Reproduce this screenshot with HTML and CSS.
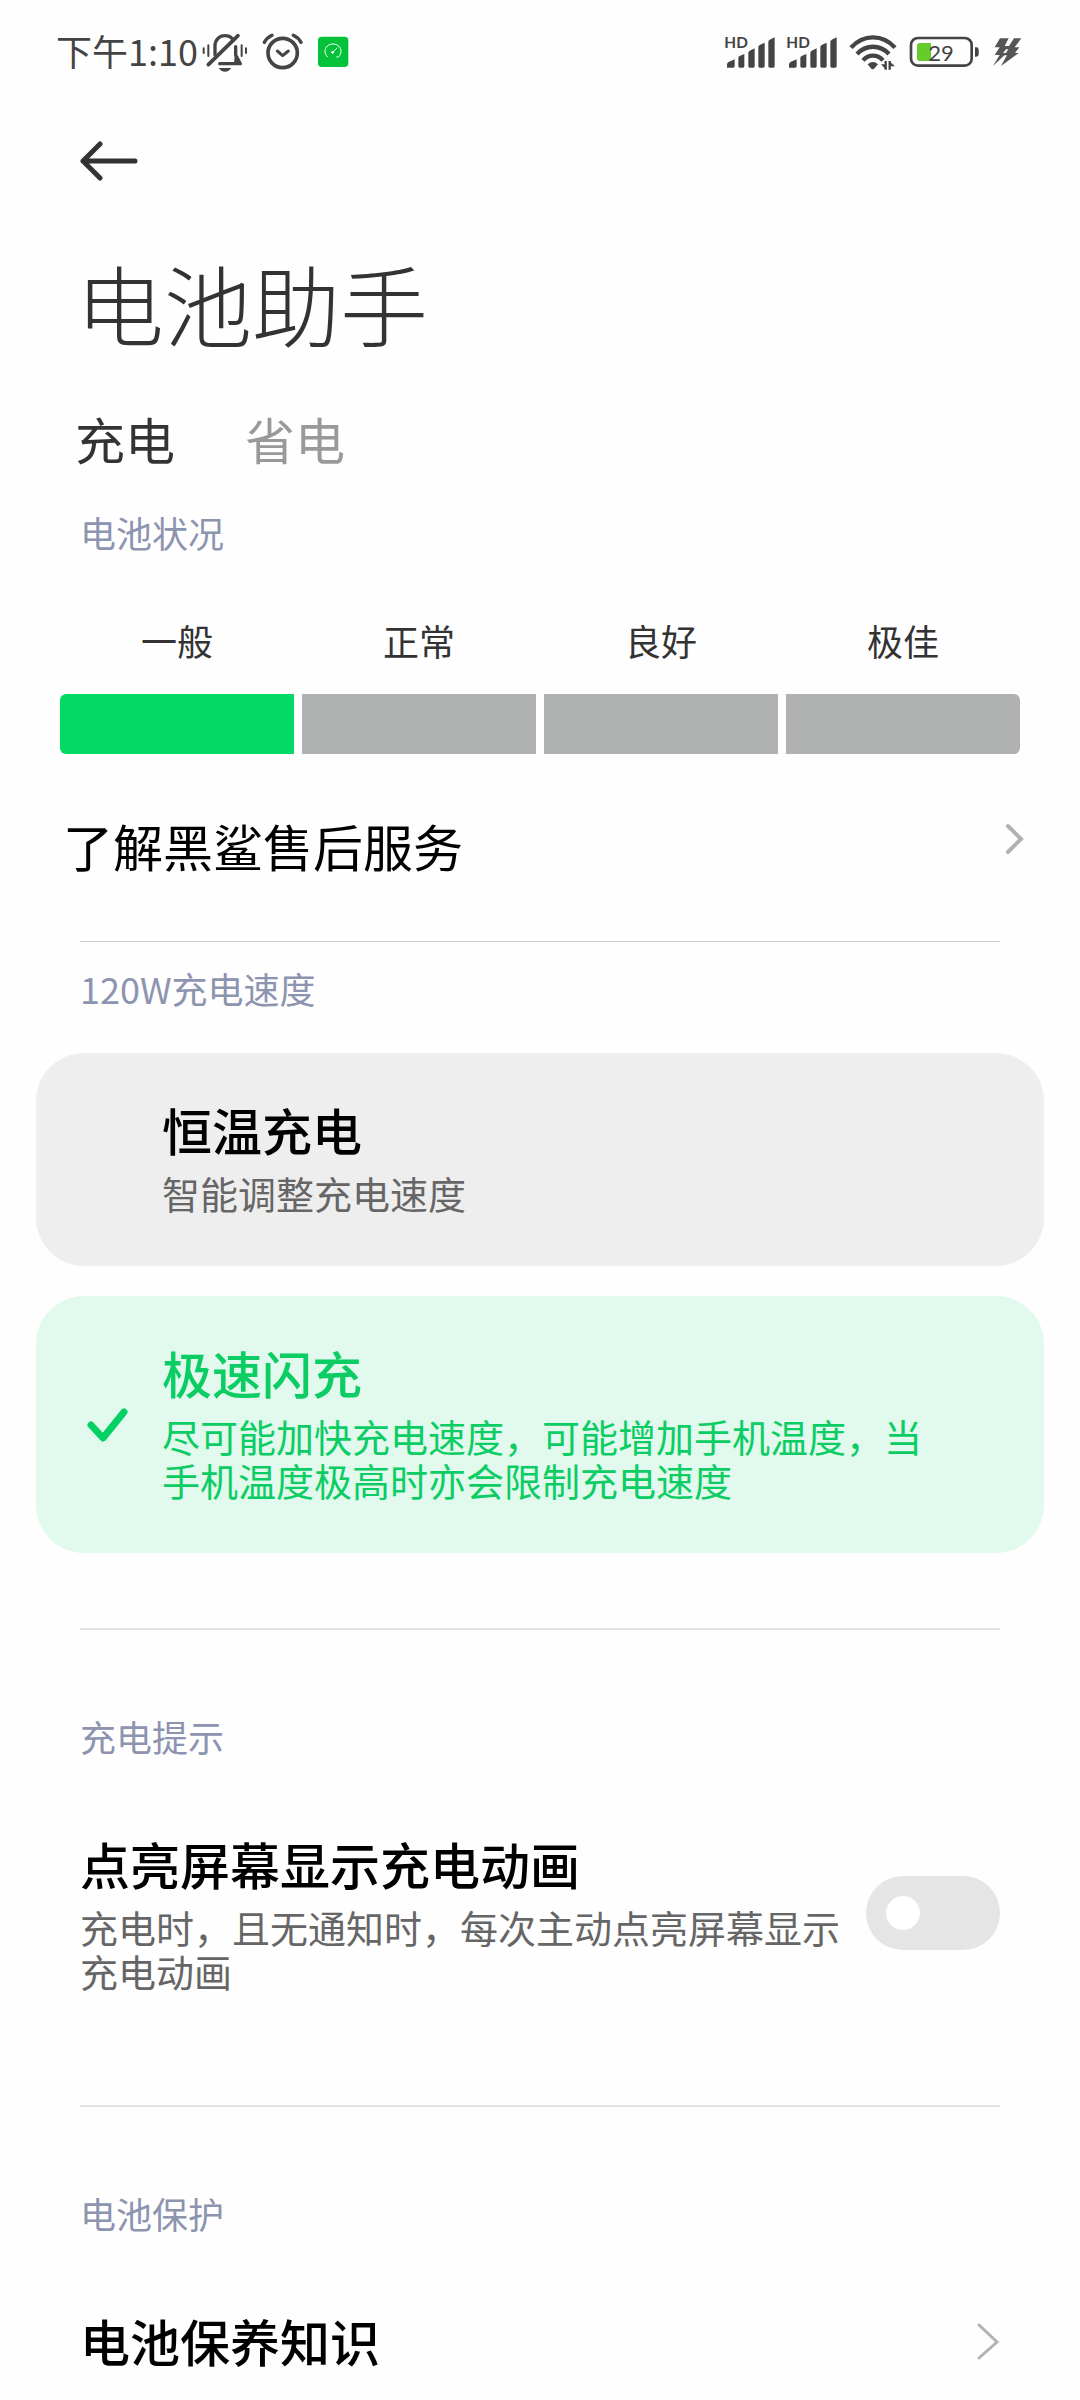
FILE: index.html
```html
<!DOCTYPE html>
<html lang="zh-CN">
<head>
    <meta charset="UTF-8">
    <meta name="viewport" content="width=device-width, initial-scale=1.0">
    <title>电池助手</title>
    <link rel="stylesheet" href="styles.css">
</head>
<body>
    <div class="status-bar">
        <span class="time">下午1:10</span>
        <div class="status-left">
            <!-- muted bell -->
            <svg class="icon" width="46" height="44" viewBox="489 30 138 132" fill="none" stroke="#444" stroke-linecap="round">
                <path d="M494 85v14M508 76v32M608 76v32M621 85v14" stroke-width="6"/>
                <path d="M528 104V78c0-18 12-31 30-31 9 0 16 3 21 8" stroke-width="10"/>
                <path d="M508 134 597 47" stroke-width="11"/>
                <path d="M590 80v25l14 26h-62" stroke-width="10" stroke-linejoin="round"/>
                <path d="M589 82v28l12 22h-16z" fill="#444" stroke="none"/>
                <path d="M539 144h38c-5 7-11 11-19 11s-14-4-19-11z" fill="#444" stroke="none"/>
            </svg>
            <!-- alarm clock -->
            <svg class="icon" width="41" height="44" viewBox="666 30 123 132" fill="none" stroke="#444" stroke-linecap="round" stroke-linejoin="round">
                <circle cx="728" cy="99" r="44" stroke-width="11"/>
                <path d="M673 67c5-9 13-16 23-21M783 67c-5-9-13-16-23-21" stroke-width="10"/>
                <path d="M712 93l16 14 17-14" stroke-width="9"/>
            </svg>
            <!-- speed app -->
            <svg class="icon" width="32" height="44" viewBox="834 30 96 132" fill="none" stroke="#fff" stroke-linecap="round">
                <rect x="837" y="50" width="91" height="91" rx="11" fill="#05c23b" stroke="none"/>
                <path d="M866 111c-5-5-8-10-8-17 0-13 11-22 24-22s24 9 24 22c0 7-3 12-8 17h-5" stroke-width="3"/>
                <path d="M881 97l13-13" stroke-width="3"/>
                <circle cx="881" cy="97" r="4" fill="#fff" stroke="none"/>
            </svg>
        </div>
        <div class="status-right">
            <!-- mobile signal, SIM 1 and SIM 2 -->
            <svg class="icon" width="50" height="44" viewBox="75 30 150 132" fill="#444">
                <text class="hd" x="73" y="84">HD</text>
                <path d="M81 143v-10q1-6 6-8l17-7v21q0 4-4 4zM115 139v-25q0-4 4-6l14-6v37q0 4-4 4h-10q-4 0-4-4zM145 139V99q0-5 4-7l15-7v54q0 4-4 4h-11q-4 0-4-4zM175 139V82q0-5 4-7l15-7v71q0 4-4 4h-11q-4 0-4-4zM205 139V66q0-5 4-7l15-7v87q0 4-4 4h-11q-4 0-4-4z"/>
            </svg>
            <svg class="icon" width="50" height="44" viewBox="75 30 150 132" fill="#444">
                <text class="hd" x="73" y="84">HD</text>
                <path d="M81 143v-10q1-6 6-8l17-7v21q0 4-4 4zM115 139v-25q0-4 4-6l14-6v37q0 4-4 4h-10q-4 0-4-4zM145 139V99q0-5 4-7l15-7v54q0 4-4 4h-11q-4 0-4-4zM175 139V82q0-5 4-7l15-7v71q0 4-4 4h-11q-4 0-4-4zM205 139V66q0-5 4-7l15-7v87q0 4-4 4h-11q-4 0-4-4z"/>
            </svg>
            <!-- wifi -->
            <svg class="icon" width="48" height="44" viewBox="441 30 144 132" fill="none" stroke="#444">
                <path d="M447 83c37-41 95-41 132 0" stroke-width="13"/>
                <path d="M465 102c27-29 69-29 96 0" stroke-width="13"/>
                <path d="M483 121c17-19 43-19 60 0" stroke-width="13"/>
                <path d="M497 133q16-14 31 0l-12 13q-4 3-8 0z" fill="#444" stroke="none"/>
                <path d="M551 123v26M563 123v26" stroke-width="7"/>
                <path d="M550 147l-13-14h14zM564 125l15 14h-15z" fill="#444" stroke="none"/>
            </svg>
            <!-- battery -->
            <svg class="icon" width="71" height="44" viewBox="624 30 213 132">
                <rect x="630" y="54" width="182" height="83" rx="21" fill="none" stroke="#444" stroke-width="8"/>
                <path d="M822 82h4q7 0 7 7v14q0 7-7 7h-4z" fill="#444"/>
                <path d="M656 69h34v54h-34q-8 0-8-8V77q0-8 8-8z" fill="#66cc2a"/>
                <text class="level" x="682" y="122">29</text>
            </svg>
            <!-- fast charging -->
            <svg class="icon" width="30" height="44" viewBox="870 30 90 132" fill="#555">
                <path d="M894 55h26l-12 23h13l15-23h22l-20 27h14l-13 17h11l-53 39 18-32h-8l-34 32 20-33h-15l15-23h-15zM912 88l-9 11h9l7-11z" fill-rule="evenodd"/>
            </svg>
        </div>
    </div>

    <header class="top">
        <a class="back" href="#" aria-label="返回">
            <svg class="icon" width="66" height="40" viewBox="0 0 66 40" fill="none" stroke="#333" stroke-width="5" stroke-linecap="round" stroke-linejoin="round">
                <path d="M24 3 7 20l17 17M7 20h52"/>
            </svg>
        </a>
        <h1>电池助手</h1>
    </header>

    <nav class="tabs">
        <button type="button" class="tab active">充电</button>
        <button type="button" class="tab">省电</button>
    </nav>

    <main>
        <section class="condition">
            <h2>电池状况</h2>
            <ul class="levels">
                <li class="current">一般</li>
                <li>正常</li>
                <li>良好</li>
                <li>极佳</li>
            </ul>
            <a class="service" href="#">
                <span>了解黑鲨售后服务</span>
                <svg class="icon" width="20" height="32" viewBox="0 0 20 32" fill="none" stroke="#b2b2b2" stroke-width="4" stroke-linecap="round">
                    <path d="M3 3l13 13L3 29"/>
                </svg>
            </a>
        </section>

        <section class="speed">
            <h2>120W充电速度</h2>
            <label class="card">
                <input type="radio" name="speed" value="constant">
                <svg class="check" width="44" height="36" viewBox="0 0 44 36">
                    <path d="M5 18l12 13L38 5"/>
                </svg>
                <span class="text">
                    <span class="title">恒温充电</span>
                    <span class="desc">智能调整充电速度</span>
                </span>
            </label>
            <label class="card">
                <input type="radio" name="speed" value="fast" checked>
                <svg class="check" width="44" height="36" viewBox="0 0 44 36">
                    <path d="M5 18l12 13L38 5"/>
                </svg>
                <span class="text">
                    <span class="title">极速闪充</span>
                    <span class="desc">尽可能加快充电速度，可能增加手机温度，当手机温度极高时亦会限制充电速度</span>
                </span>
            </label>
        </section>

        <section class="group">
            <h2>充电提示</h2>
            <label class="row">
                <span class="text">
                    <span class="title">点亮屏幕显示充电动画</span>
                    <span class="desc">充电时，且无通知时，每次主动点亮屏幕显示充电动画</span>
                </span>
                <input type="checkbox" class="switch">
            </label>
        </section>

        <section class="group">
            <h2>电池保护</h2>
            <a class="row" href="#">
                <span class="title">电池保养知识</span>
                <svg class="icon" width="24" height="40" viewBox="0 0 24 40" fill="none" stroke="#b2b2b2" stroke-width="3" stroke-linecap="round">
                    <path d="M3 5l18 17L3 38"/>
                </svg>
            </a>
        </section>
    </main>
</body>
</html>
```
FILE: styles.css
```css
* {
    box-sizing: border-box;
}
body {
    margin: 0;
    padding-bottom: 29px;
    background-color: #fefefe;
    color: #000;
    font-family: "Noto Sans CJK SC", sans-serif;
}
h1, h2, ul {
    margin: 0;
    padding: 0;
    font-weight: 400;
}
a {
    color: inherit;
    text-decoration: none;
}
.icon, .check {
    display: block;
    flex-shrink: 0;
}

/* status bar */
.status-bar {
    display: flex;
    align-items: center;
    height: 104px;
    padding: 0 58px 0 56px;
}
.time {
    padding-bottom: 4px;
    color: #444;
    font-size: 36px;
    line-height: 48px;
}
.status-left {
    display: flex;
    gap: 14px;
    margin-left: 4px;
}
.status-right {
    display: flex;
    gap: 12px;
    margin-left: auto;
}
.hd {
    font-family: Lato, sans-serif;
    font-size: 46px;
    font-weight: 700;
}
.level {
    fill: #444;
    font-family: Lato, sans-serif;
    font-size: 66px;
}

/* header */
.top {
    padding: 37px 76px 0;
}
.back {
    display: inline-block;
}
h1 {
    margin-top: 56px;
    color: #333;
    font-size: 88px;
    font-weight: 300;
    line-height: 120px;
}
.tabs {
    display: flex;
    gap: 70px;
    padding: 46px 75px 40px;
}
.tab {
    padding: 0;
    border: none;
    background: none;
    color: #999;
    font-family: inherit;
    font-size: 50px;
    line-height: 60px;
    cursor: pointer;
}
.tab.active {
    color: #333;
}

h2 {
    padding: 0 80px;
    color: #8d94b0;
    font-size: 36px;
    line-height: 48px;
}
.title {
    display: block;
    font-size: 50px;
    font-weight: 500;
    line-height: 60px;
}
.desc {
    display: block;
    margin-top: 12px;
    color: #666;
    font-size: 38px;
    line-height: 44px;
}

/* battery condition */
.levels {
    display: flex;
    gap: 8px;
    padding: 60px 60px 0;
    list-style: none;
}
.levels li {
    flex: 1;
    color: #333;
    font-size: 36px;
    line-height: 48px;
    text-align: center;
}
.levels li::after {
    content: "";
    display: block;
    height: 60px;
    margin-top: 30px;
    background-color: #b0b2b1;
}
.levels li.current::after {
    background-color: #03da66;
}
.levels li:first-child::after {
    border-radius: 6px 0 0 6px;
}
.levels li:last-child::after {
    border-radius: 0 6px 6px 0;
}
.service {
    display: flex;
    justify-content: space-between;
    padding: 61px 55px 66px 63px;
    font-size: 50px;
    line-height: 60px;
}
.service .icon {
    margin-top: 8px;
}

/* charging speed */
.speed::before {
    content: "";
    display: block;
    height: 1px;
    margin: 0 80px 22px;
    background-color: #ccc;
}
.speed h2 {
    margin-bottom: 41px;
}
.card {
    display: flex;
    align-items: center;
    gap: 32px;
    margin: 0 36px 30px;
    padding: 46px 90px 46px 50px;
    border-radius: 48px;
    background-color: #eee;
    cursor: pointer;
}
.card .text {
    padding-bottom: 5px;
}
.card input {
    position: absolute;
    opacity: 0;
}
.check {
    fill: none;
    stroke: #04d163;
    stroke-width: 7;
    stroke-linecap: round;
    stroke-linejoin: round;
    visibility: hidden;
}
.card:has(input:checked) {
    background-color: #e2f9ed;
}
.card input:checked ~ .check {
    visibility: visible;
}
.card input:checked ~ .text .title,
.card input:checked ~ .text .desc {
    color: #0bcd64;
}

/* other settings */
.group::before {
    content: "";
    display: block;
    height: 2px;
    margin: 75px 80px 82px;
    background-color: #e2e2e2;
}
.group + .group::before {
    margin-top: 112px;
}
.row {
    display: flex;
    align-items: center;
    justify-content: space-between;
    gap: 20px;
    padding: 73px 80px 0;
    cursor: pointer;
}
.switch {
    flex-shrink: 0;
    appearance: none;
    width: 134px;
    height: 74px;
    margin: 0;
    padding: 20px;
    border-radius: 37px;
    background-color: #e5e5e5;
    cursor: pointer;
}
.switch::before {
    content: "";
    display: block;
    width: 34px;
    height: 34px;
    border-radius: 50%;
    background-color: #fff;
}
.switch:checked {
    background-color: #03da66;
}
.switch:checked::before {
    margin-left: auto;
}
```
